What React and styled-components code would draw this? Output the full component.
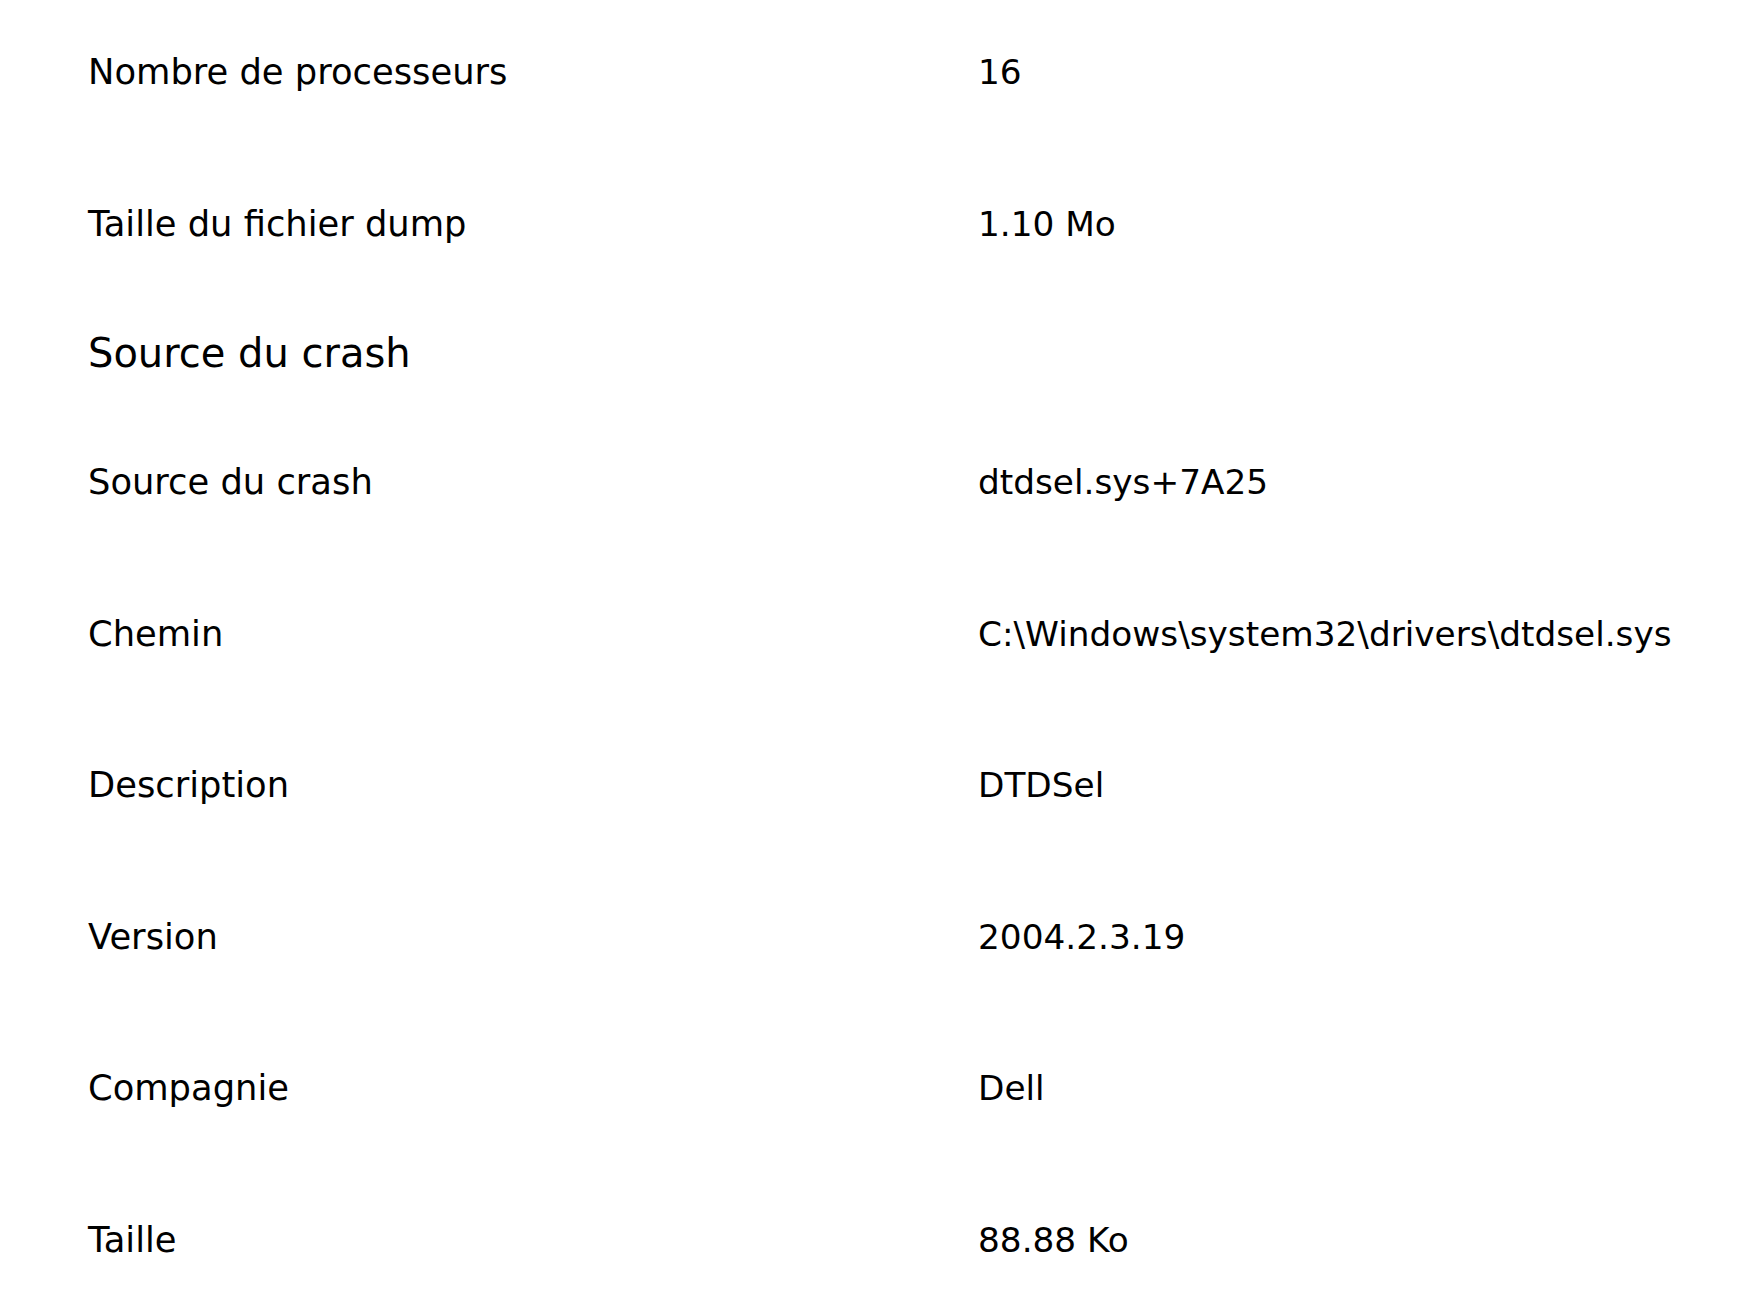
import styled, { createGlobalStyle } from "styled-components";

const GlobalStyle = createGlobalStyle`
  html, body {
    margin: 0;
    padding: 0;
    background: #ffffff;
  }
  body {
    font-family: "DejaVu Sans", "Liberation Sans", sans-serif;
    color: #000000;
  }
`;

const Page = styled.div`
  padding: 1px 40px 0 88px;
`;

const Row = styled.div`
  display: grid;
  grid-template-columns: 890px 1fr;
  height: 151.5px;
  padding-top: 46px;
  box-sizing: border-box;
  align-items: start;
`;

const Cell = styled.div`
  font-size: ${({ $value }) => ($value ? "34.3px" : "35.3px")};
  line-height: 50px;
  white-space: nowrap;
`;

const Heading = styled.h2`
  margin: 0;
  padding: 21px 0 30px;
  font-size: 40px;
  font-weight: normal;
  line-height: 56px;
`;

const general = [
  ["Nombre de processeurs", "16"],
  ["Taille du fichier dump", "1.10 Mo"],
];

const source = [
  ["Source du crash", "dtdsel.sys+7A25"],
  ["Chemin", "C:\\Windows\\system32\\drivers\\dtdsel.sys"],
  ["Description", "DTDSel"],
  ["Version", "2004.2.3.19"],
  ["Compagnie", "Dell"],
  ["Taille", "88.88 Ko"],
];

const InfoRow = ({ label, value }) => (
  <Row>
    <Cell>{label}</Cell>
    <Cell $value>{value}</Cell>
  </Row>
);

const App = () => {
  return (
    <>
      <GlobalStyle />
      <Page>
        {general.map(([label, value]) => (
          <InfoRow key={label} label={label} value={value} />
        ))}
        <Heading>Source du crash</Heading>
        {source.map(([label, value]) => (
          <InfoRow key={label} label={label} value={value} />
        ))}
      </Page>
    </>
  );
};

export default App;
